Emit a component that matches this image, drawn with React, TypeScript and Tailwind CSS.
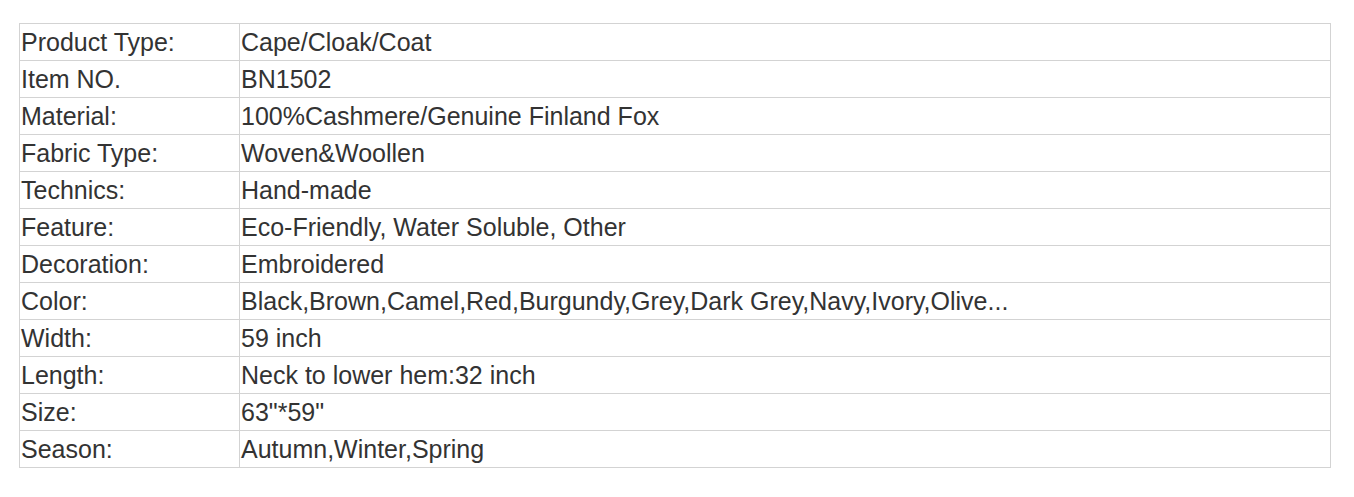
import React from "react";

const rows: [string, string][] = [
  ["Product Type:", "Cape/Cloak/Coat"],
  ["Item NO.", "BN1502"],
  ["Material:", "100%Cashmere/Genuine Finland Fox"],
  ["Fabric Type:", "Woven&Woollen"],
  ["Technics:", "Hand-made"],
  ["Feature:", "Eco-Friendly, Water Soluble, Other"],
  ["Decoration:", "Embroidered"],
  ["Color:", "Black,Brown,Camel,Red,Burgundy,Grey,Dark Grey,Navy,Ivory,Olive..."],
  ["Width:", "59 inch"],
  ["Length:", "Neck to lower hem:32 inch"],
  ["Size:", "63\"*59\""],
  ["Season:", "Autumn,Winter,Spring"],
];

export default function App() {
  return (
    <div className="w-[1354px] h-[497px] bg-white pl-[19px] pt-[23px] font-['Liberation_Sans',Arial,sans-serif] text-[#333333]">
      <table className="w-[1312px] border-collapse table-fixed">
        <colgroup>
          <col className="w-[220px]" />
          <col />
        </colgroup>
        <tbody>
          {rows.map(([k, v]) => (
            <tr key={k} className="h-[37px]">
              <td className="border border-[#d3d3d3] px-[1px] py-0 align-middle text-[25px] leading-[normal] whitespace-nowrap">
                {k}
              </td>
              <td className="border border-[#d3d3d3] px-[1px] py-0 align-middle text-[25px] leading-[normal] whitespace-nowrap">
                {v}
              </td>
            </tr>
          ))}
        </tbody>
      </table>
    </div>
  );
}
